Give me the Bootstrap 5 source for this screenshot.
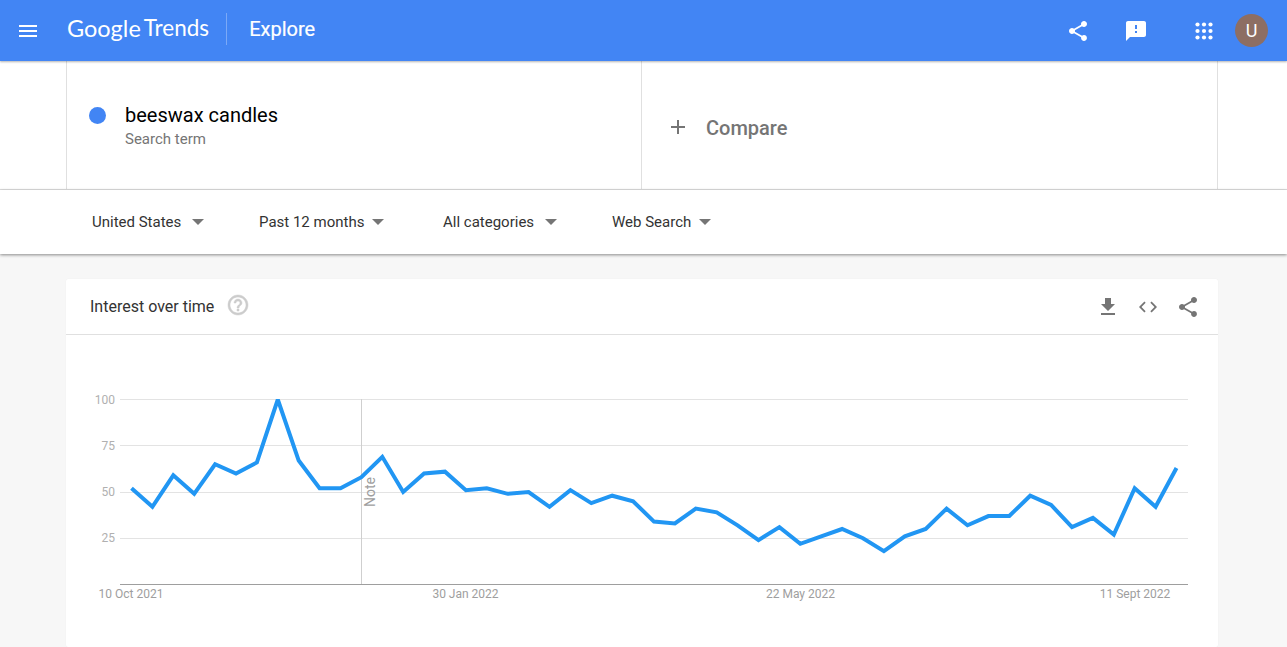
<!DOCTYPE html>
<html lang="en">
<head>
<meta charset="utf-8">
<title>Google Trends</title>
<link href="https://cdn.jsdelivr.net/npm/bootstrap@5.3.0/dist/css/bootstrap.min.css" rel="stylesheet">
<style>
html,body{height:647px;overflow:hidden}
body{background:#f7f7f7;font-family:Roboto,"Liberation Sans",sans-serif;color:#333}
.gt-head{height:61px;background:#4285f4;color:#fff;box-shadow:0 1px 2px rgba(0,0,0,.3);position:relative;z-index:2;padding:0 19px 0 16px}
.gt-head svg{fill:#fff;display:block}
.gt-logo{margin-left:27px;font-family:Lato,Roboto,sans-serif;font-size:23.5px;line-height:1;padding-right:17px;height:32px;border-right:1px solid rgba(255,255,255,.3);margin-top:-4px}
.gt-logo span+span{margin-left:3px;font-weight:400;font-size:22.5px}
.gt-explore{font-size:20px;font-weight:400;margin-left:22px;margin-top:-3px;-webkit-text-stroke:.2px #fff}
.gt-avatar{width:33px;height:33px;border-radius:50%;background:#8d6e63;font-size:18px;margin-left:19px}
.gt-actions{gap:34px}
.gt-apps{margin-left:10px}
.gt-search{background:#fff;height:129px;border-bottom:1px solid #e0e0e0;padding:0 69px 0 66px}
.gt-term{height:128px;border-left:1px solid #e0e0e0;padding-left:22px;padding-top:2px;width:575px}
.gt-compare{height:128px;border-left:1px solid #e0e0e0;border-right:1px solid #e0e0e0;padding-left:24px;padding-top:6px;color:#757575;width:577px}
.gt-dot{width:17px;height:17px;border-radius:50%;background:#4285f4;margin-right:19px;margin-top:-22px}
.gt-name{font-size:20px;line-height:24px;color:#000}
.gt-sub{font-size:15px;line-height:20px;color:#757575;margin-top:2px}
.gt-compare svg{fill:#757575;margin-right:16px;margin-top:-2px}
.gt-comp-text{font-size:20px;font-weight:500}
.gt-filters{background:#fff;height:64px;box-shadow:0 1px 3px rgba(0,0,0,.45);padding-left:92px;position:relative;font-size:15px;color:#333}
.gt-filter{display:flex;align-items:center}
.gt-filter i{width:0;height:0;border-left:6px solid transparent;border-right:6px solid transparent;border-top:6px solid #757575;display:block;margin-left:11px}
.gt-f1{width:167px}.gt-f2{width:184px}.gt-f3{width:169px}
.gt-f2 i,.gt-f4 i{margin-left:8px}
.gt-panel{margin:25px 69px 0 66px;background:#fff;border-radius:2px;box-shadow:0 0 1px rgba(0,0,0,.08)}
.gt-panel-head{height:56px;border-bottom:1px solid #e0e0e0;padding:0 18px 0 24px}
.gt-panel-title{font-size:16px;color:#333}
.gt-help{fill:#ccc;stroke:#ccc;stroke-width:.5;margin-left:12px;margin-top:-4px}
.gt-tools svg{fill:#757575;display:block}
.gt-tools{gap:16px}
.gt-chart{display:block}
.gt-chart text{font-family:Roboto,"Liberation Sans",sans-serif;font-size:12px;fill:#b0b0b0}
.gt-chart .gt-note{font-size:14px;fill:#9e9e9e}
.gt-chart .gt-date{fill:#9e9e9e}
</style>
</head>
<body>
<header class="gt-head d-flex align-items-center">
  <svg width="24" height="24" viewBox="0 0 24 24"><path d="M3 18h18v-2H3v2zm0-5h18v-2H3v2zm0-7v2h18V6H3z"/></svg>
  <div class="gt-logo d-flex align-items-center"><span>Google</span><span>Trends</span></div>
  <div class="gt-explore">Explore</div>
  <div class="gt-actions d-flex align-items-center ms-auto">
    <svg width="24" height="24" viewBox="0 0 24 24"><path d="M18 16.08c-.76 0-1.44.3-1.96.77L8.91 12.7c.05-.23.09-.46.09-.7s-.04-.47-.09-.7l7.05-4.11c.54.5 1.25.81 2.04.81 1.66 0 3-1.34 3-3s-1.34-3-3-3-3 1.34-3 3c0 .24.04.47.09.7L8.04 9.81C7.5 9.31 6.79 9 6 9c-1.66 0-3 1.34-3 3s1.34 3 3 3c.79 0 1.5-.31 2.04-.81l7.12 4.16c-.05.21-.08.43-.08.65 0 1.61 1.31 2.92 2.92 2.92 1.61 0 2.92-1.31 2.92-2.92s-1.31-2.92-2.92-2.92z"/></svg>
    <svg width="24" height="24" viewBox="0 0 24 24"><path d="M20 2H4c-1.1 0-1.99.9-1.99 2L2 22l4-4h14c1.1 0 2-.9 2-2V4c0-1.1-.9-2-2-2zm-7 12h-2v-2h2v2zm0-4h-2V6h2v4z"/></svg>
    <svg class="gt-apps" width="24" height="24" viewBox="0 0 24 24"><g><circle cx="5.5" cy="5.5" r="2.1"/><circle cx="12" cy="5.5" r="2.1"/><circle cx="18.5" cy="5.5" r="2.1"/><circle cx="5.5" cy="12" r="2.1"/><circle cx="12" cy="12" r="2.1"/><circle cx="18.5" cy="12" r="2.1"/><circle cx="5.5" cy="18.5" r="2.1"/><circle cx="12" cy="18.5" r="2.1"/><circle cx="18.5" cy="18.5" r="2.1"/></g></svg>
  </div>
  <div class="gt-avatar d-flex align-items-center justify-content-center">U</div>
</header>

<section class="gt-search">
  <div class="row g-0">
    <div class="col-6 gt-term d-flex align-items-center">
      <span class="gt-dot"></span>
      <div>
        <div class="gt-name">beeswax candles</div>
        <div class="gt-sub">Search term</div>
      </div>
    </div>
    <div class="col-6 gt-compare d-flex align-items-center">
      <svg width="24" height="24" viewBox="0 0 24 24"><path d="M19 13h-6v6h-2v-6H5v-2h6V5h2v6h6v2z"/></svg>
      <span class="gt-comp-text">Compare</span>
    </div>
  </div>
</section>

<nav class="gt-filters d-flex align-items-center">
  <div class="gt-filter gt-f1">United States<i></i></div>
  <div class="gt-filter gt-f2">Past 12 months<i></i></div>
  <div class="gt-filter gt-f3">All categories<i></i></div>
  <div class="gt-filter gt-f4">Web Search<i></i></div>
</nav>

<main class="gt-panel">
  <div class="gt-panel-head d-flex align-items-center">
    <span class="gt-panel-title">Interest over time</span>
    <svg class="gt-help" width="24" height="24" viewBox="0 0 24 24"><path d="M11 18h2v-2h-2v2zm1-16C6.48 2 2 6.48 2 12s4.48 10 10 10 10-4.48 10-10S17.52 2 12 2zm0 18c-4.41 0-8-3.59-8-8s3.59-8 8-8 8 3.59 8 8-3.59 8-8 8zm0-14c-2.21 0-4 1.79-4 4h2c0-1.1.9-2 2-2s2 .9 2 2c0 2-3 1.75-3 5h2c0-2.25 3-2.5 3-5 0-2.21-1.79-4-4-4z"/></svg>
    <div class="gt-tools d-flex align-items-center ms-auto">
      <svg width="24" height="24" viewBox="0 0 24 24"><path d="M19 9h-4V3H9v6H5l7 7 7-7zM5 18v2h14v-2H5z"/></svg>
      <svg width="24" height="24" viewBox="0 0 24 24"><path d="M9.4 16.6L4.8 12l4.6-4.6L8 6l-6 6 6 6 1.4-1.4zm5.2 0l4.6-4.6-4.6-4.6L16 6l6 6-6 6-1.4-1.4z" transform="translate(1.2 1.2) scale(.9)"/></svg>
      <svg width="24" height="24" viewBox="0 0 24 24"><path d="M18 16.08c-.76 0-1.44.3-1.96.77L8.91 12.7c.05-.23.09-.46.09-.7s-.04-.47-.09-.7l7.05-4.11c.54.5 1.25.81 2.04.81 1.66 0 3-1.34 3-3s-1.34-3-3-3-3 1.34-3 3c0 .24.04.47.09.7L8.04 9.81C7.5 9.31 6.79 9 6 9c-1.66 0-3 1.34-3 3s1.34 3 3 3c.79 0 1.5-.31 2.04-.81l7.12 4.16c-.05.21-.08.43-.08.65 0 1.61 1.31 2.92 2.92 2.92 1.61 0 2.92-1.31 2.92-2.92s-1.31-2.92-2.92-2.92z"/></svg>
    </div>
  </div>
  <svg class="gt-chart" width="1152" height="312" viewBox="66 335 1152 312">
    <defs><clipPath id="gt-clip"><rect x="120" y="399" width="1068" height="186"/></clipPath></defs>
    <g stroke="#e3e3e3" stroke-width="1">
      <line x1="120" x2="1188" y1="399.5" y2="399.5"/>
      <line x1="120" x2="1188" y1="445.5" y2="445.5"/>
      <line x1="120" x2="1188" y1="492.5" y2="492.5"/>
      <line x1="120" x2="1188" y1="538.5" y2="538.5"/>
    </g>
    <line x1="120" x2="1188" y1="584.5" y2="584.5" stroke="#9e9e9e"/>
    <line x1="361.5" x2="361.5" y1="399" y2="584" stroke="#cfcfcf"/>
    <text x="115" y="404" text-anchor="end">100</text>
    <text x="115" y="450" text-anchor="end">75</text>
    <text x="115" y="496" text-anchor="end">50</text>
    <text x="115" y="542" text-anchor="end">25</text>
    <text class="gt-date" x="131" y="598" text-anchor="middle">10 Oct 2021</text>
    <text class="gt-date" x="465.5" y="598" text-anchor="middle">30 Jan 2022</text>
    <text class="gt-date" x="800.5" y="598" text-anchor="middle">22 May 2022</text>
    <text class="gt-date" x="1135" y="598" text-anchor="middle">11 Sept 2022</text>
    <text class="gt-note" transform="translate(375 507) rotate(-90)">Note</text>
    <polyline clip-path="url(#gt-clip)" fill="none" stroke="#2196f3" stroke-width="4" stroke-linejoin="miter" points="131.5,488.3 152.4,506.8 173.3,475.35 194.2,493.85 215.1,464.25 236,473.5 256.9,462.4 277.8,399.5 298.7,460.55 319.6,488.3 340.5,488.3 361.4,477.2 382.3,456.85 403.2,492 424.1,473.5 445,471.65 465.9,490.15 486.8,488.3 507.7,493.85 528.6,492 549.5,506.8 570.4,490.15 591.3,503.1 612.2,495.7 633.1,501.25 654,521.6 674.9,523.45 695.8,508.65 716.7,512.35 737.6,525.3 758.5,540.1 779.4,527.15 800.3,543.8 821.2,536.4 842.1,529 863,538.25 883.9,551.2 904.8,536.4 925.7,529 946.6,508.65 967.5,525.3 988.4,516.05 1009.3,516.05 1030.2,495.7 1051.1,504.95 1072,527.15 1092.9,517.9 1113.8,534.55 1134.7,488.3 1155.6,506.8 1176.5,468"/>
  </svg>
</main>
<script src="https://cdn.jsdelivr.net/npm/bootstrap@5.3.0/dist/js/bootstrap.bundle.min.js"></script>
</body>
</html>
